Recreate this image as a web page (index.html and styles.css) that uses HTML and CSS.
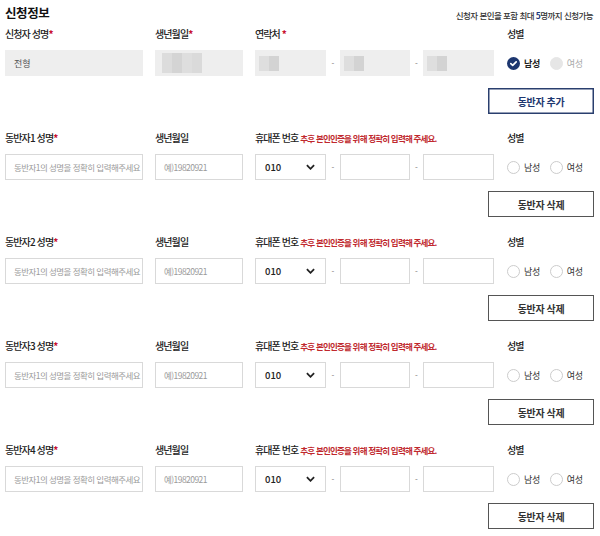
FILE: index.html
```html
<!DOCTYPE html>
<html lang="ko">
<head>
<meta charset="utf-8">
<link rel="stylesheet" href="styles.css">
</head>
<body>
<div class="page">
  <div class="header">
    <h2 class="title">신청정보</h2>
    <p class="notice">신청자 본인을 포함 최대 <b>5</b>명까지 신청가능</p>
  </div>

  <div class="row">
    <div class="field">
      <label class="lbl">신청자 성명<span class="req">*</span></label>
      <div class="box filled">전형</div>
    </div>
    <div class="field">
      <label class="lbl">생년월일<span class="req">*</span></label>
      <div class="box filled"><span class="mosaic m-wide"></span></div>
    </div>
    <div class="field">
      <label class="lbl">연락처 <span class="req">*</span></label>
      <div class="phone">
        <div class="box filled p1"><span class="mosaic m-small"></span></div>
        <span class="dash">-</span>
        <div class="box filled p2"><span class="mosaic m-small"></span></div>
        <span class="dash">-</span>
        <div class="box filled p3"><span class="mosaic m-small"></span></div>
      </div>
    </div>
    <div class="field">
      <label class="lbl">성별</label>
      <div class="gender">
        <span class="radio checked"><svg viewBox="0 0 13 13" width="13" height="13"><circle cx="6.5" cy="6.5" r="6.5" fill="#1d3770"/><path d="M3.8 6.6 L5.7 8.4 L9.2 4.8" fill="none" stroke="#fff" stroke-width="1.7" stroke-linecap="round" stroke-linejoin="round"/></svg><span class="rtxt">남성</span></span>
        <span class="radio disabled"><span class="circle"></span><span class="rtxt">여성</span></span>
      </div>
    </div>
  </div>
  <div class="actions first"><button class="btn add">동반자 추가</button></div>

  <div class="companion">
    <div class="row">
      <div class="field">
        <label class="lbl">동반자1 성명<span class="req">*</span></label>
        <div class="box ph">동반자1의 성명을 정확히 입력해주세요</div>
      </div>
      <div class="field">
        <label class="lbl">생년월일</label>
        <div class="box ph">예)19820921</div>
      </div>
      <div class="field">
        <label class="lbl">휴대폰 번호 <span class="hint">추후 본인인증을 위해 정확히 입력해 주세요.</span></label>
        <div class="phone">
          <div class="box sel p1">010<svg class="chev" viewBox="0 0 10 6" width="9" height="6"><path d="M1 1 L5 5 L9 1" fill="none" stroke="#222" stroke-width="2"/></svg></div>
          <span class="dash">-</span>
          <div class="box p2"></div>
          <span class="dash">-</span>
          <div class="box p3"></div>
        </div>
      </div>
      <div class="field">
        <label class="lbl">성별</label>
        <div class="gender">
          <span class="radio"><span class="circle"></span><span class="rtxt">남성</span></span>
          <span class="radio"><span class="circle"></span><span class="rtxt">여성</span></span>
        </div>
      </div>
    </div>
    <div class="actions"><button class="btn del">동반자 삭제</button></div>
  </div>

  <div class="companion">
    <div class="row">
      <div class="field">
        <label class="lbl">동반자2 성명<span class="req">*</span></label>
        <div class="box ph">동반자1의 성명을 정확히 입력해주세요</div>
      </div>
      <div class="field">
        <label class="lbl">생년월일</label>
        <div class="box ph">예)19820921</div>
      </div>
      <div class="field">
        <label class="lbl">휴대폰 번호 <span class="hint">추후 본인인증을 위해 정확히 입력해 주세요.</span></label>
        <div class="phone">
          <div class="box sel p1">010<svg class="chev" viewBox="0 0 10 6" width="9" height="6"><path d="M1 1 L5 5 L9 1" fill="none" stroke="#222" stroke-width="2"/></svg></div>
          <span class="dash">-</span>
          <div class="box p2"></div>
          <span class="dash">-</span>
          <div class="box p3"></div>
        </div>
      </div>
      <div class="field">
        <label class="lbl">성별</label>
        <div class="gender">
          <span class="radio"><span class="circle"></span><span class="rtxt">남성</span></span>
          <span class="radio"><span class="circle"></span><span class="rtxt">여성</span></span>
        </div>
      </div>
    </div>
    <div class="actions"><button class="btn del">동반자 삭제</button></div>
  </div>

  <div class="companion">
    <div class="row">
      <div class="field">
        <label class="lbl">동반자3 성명<span class="req">*</span></label>
        <div class="box ph">동반자1의 성명을 정확히 입력해주세요</div>
      </div>
      <div class="field">
        <label class="lbl">생년월일</label>
        <div class="box ph">예)19820921</div>
      </div>
      <div class="field">
        <label class="lbl">휴대폰 번호 <span class="hint">추후 본인인증을 위해 정확히 입력해 주세요.</span></label>
        <div class="phone">
          <div class="box sel p1">010<svg class="chev" viewBox="0 0 10 6" width="9" height="6"><path d="M1 1 L5 5 L9 1" fill="none" stroke="#222" stroke-width="2"/></svg></div>
          <span class="dash">-</span>
          <div class="box p2"></div>
          <span class="dash">-</span>
          <div class="box p3"></div>
        </div>
      </div>
      <div class="field">
        <label class="lbl">성별</label>
        <div class="gender">
          <span class="radio"><span class="circle"></span><span class="rtxt">남성</span></span>
          <span class="radio"><span class="circle"></span><span class="rtxt">여성</span></span>
        </div>
      </div>
    </div>
    <div class="actions"><button class="btn del">동반자 삭제</button></div>
  </div>

  <div class="companion">
    <div class="row">
      <div class="field">
        <label class="lbl">동반자4 성명<span class="req">*</span></label>
        <div class="box ph">동반자1의 성명을 정확히 입력해주세요</div>
      </div>
      <div class="field">
        <label class="lbl">생년월일</label>
        <div class="box ph">예)19820921</div>
      </div>
      <div class="field">
        <label class="lbl">휴대폰 번호 <span class="hint">추후 본인인증을 위해 정확히 입력해 주세요.</span></label>
        <div class="phone">
          <div class="box sel p1">010<svg class="chev" viewBox="0 0 10 6" width="9" height="6"><path d="M1 1 L5 5 L9 1" fill="none" stroke="#222" stroke-width="2"/></svg></div>
          <span class="dash">-</span>
          <div class="box p2"></div>
          <span class="dash">-</span>
          <div class="box p3"></div>
        </div>
      </div>
      <div class="field">
        <label class="lbl">성별</label>
        <div class="gender">
          <span class="radio"><span class="circle"></span><span class="rtxt">남성</span></span>
          <span class="radio"><span class="circle"></span><span class="rtxt">여성</span></span>
        </div>
      </div>
    </div>
    <div class="actions"><button class="btn del">동반자 삭제</button></div>
  </div>
</div>
</body>
</html>
```

FILE: styles.css
```css
* { box-sizing: border-box; margin: 0; padding: 0; }
html, body { background: #fff; }
body {
  font-family: "Noto Sans CJK KR", "Noto Sans", sans-serif;
  color: #222;
  width: 600px;
  overflow: hidden;
}
.page { padding: 3px 5px 0 5px; }

.header {
  display: flex;
  justify-content: space-between;
  align-items: center;
  height: 20px;
}
.title { font-size: 12.5px; font-weight: 700; line-height: 20px; letter-spacing: -0.4px; color: #111; }
.notice { font-size: 8.5px; font-weight: 500; color: #333; letter-spacing: -0.55px; padding-top: 4px; padding-right: 2px; }
.notice b { color: #1d3a7a; font-weight: 700; }

.row {
  display: grid;
  grid-template-columns: 138px 88px 239px 1fr;
  column-gap: 12px;
  margin-top: 3px;
}
.row > .field:nth-child(4) { margin-left: 1px; }
.field { display: flex; flex-direction: column; }
.lbl {
  font-size: 10px;
  font-weight: 500;
  line-height: 16px;
  height: 16px;
  color: #222;
  letter-spacing: -0.9px;
  white-space: nowrap;
  margin-bottom: 8px;
}
.req { color: #c8102e; font-weight: 700; }
.hint { color: #c0282d; font-size: 8.5px; font-weight: 700; letter-spacing: -0.8px; }

.box {
  height: 26px;
  border: 1px solid #d9d9d9;
  background: #fff;
  display: flex;
  align-items: center;
  padding: 0 8px;
  font-size: 9px;
  color: #333;
  overflow: hidden;
  white-space: nowrap;
}
.box.filled { background: #eeeeee; border-color: #eeeeee; color: #555; }
.box.ph { color: #9a9a9a; font-size: 8.5px; letter-spacing: -0.55px; padding-right: 1px; }
.box.sel { justify-content: space-between; font-weight: 500; color: #222; font-size: 9.5px; padding: 0 10px 0 9px; }
.chev { display: block; }

.phone { display: flex; align-items: center; }
.p1 { width: 71px; }
.p2 { width: 70px; }
.p3 { width: 71px; }
.dash { width: 14px; text-align: center; font-size: 8px; color: #777; }
.dash + .p2 + .dash { width: 13px; }

.mosaic { display: block; height: 20px; }
.m-wide {
  width: 40px; margin-left: -2px;
  background:
    linear-gradient(90deg, #dcdcdc 0 10px, #d4d4d4 10px 20px, #dedede 20px 30px, #dadada 30px 40px);
}
.m-small {
  width: 20px; height: 15px; margin-left: -5px;
  background: linear-gradient(90deg, #dedede 0 10px, #d3d3d3 10px 20px);
}

.gender { display: flex; align-items: center; height: 26px; gap: 10px; }
.radio { display: inline-flex; align-items: center; gap: 4px; font-size: 9px; color: #333; }
.radio svg { display: block; }
.circle {
  width: 13px; height: 13px; border-radius: 50%;
  border: 1px solid #ccc; background: #fff; display: block;
}
.radio.disabled { color: #aaa; }
.radio.disabled .circle { background: #e6e6e6; border-color: #e6e6e6; }
.radio.checked { font-weight: 700; color: #222; }
.rtxt { letter-spacing: -0.4px; }

.actions { display: flex; justify-content: flex-end; padding-right: 1px; margin-top: 11px; }
.actions.first { margin-top: 12px; }
.btn {
  width: 106px; height: 26px;
  background: #fff;
  font-family: inherit;
  font-size: 10px;
  font-weight: 700;
  letter-spacing: -0.4px;
  cursor: pointer;
}
.btn.add { border: 1px solid #2a3f6e; color: #1d3770; box-shadow: inset 0 0 0 0.5px #2a3f6e; }
.btn.del { border: 1px solid #555; color: #333; }

.companion { margin-top: 16px; }
.companion + .companion { margin-top: 17px; }
```
